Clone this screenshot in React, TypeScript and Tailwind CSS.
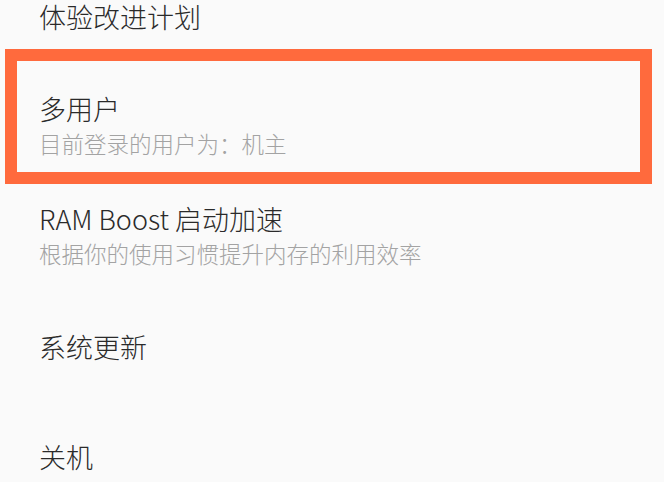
const items: { title: string; subtitle?: string }[] = [
  { title: '体验改进计划' },
  { title: '多用户', subtitle: '目前登录的用户为：机主' },
  { title: 'RAM Boost 启动加速', subtitle: '根据你的使用习惯提升内存的利用效率' },
  { title: '系统更新' },
  { title: '关机' },
];

export default function App() {
  return (
    <div
      className="relative w-[664px] h-[482px] overflow-hidden bg-[#fafafa]"
      style={{ fontFamily: '"Noto Sans CJK SC", "Noto Sans", sans-serif' }}
    >
      <div className="-mt-[39px] flex flex-col">
        {items.map((item) => (
          <div key={item.title} className="h-[110px] flex flex-col justify-center pl-[39px]">
            <div className="text-[27px] leading-[35px] font-light text-[#2a2a2a]">{item.title}</div>
            {item.subtitle && (
              <div className="text-[22.5px] leading-[35px] font-light text-[#a3a3a3]">{item.subtitle}</div>
            )}
          </div>
        ))}
      </div>

      {/* highlight annotation */}
      <div className="absolute left-[5px] top-[49px] w-[647px] h-[135px] border-[12px] border-[#ff6a3d]" />
    </div>
  );
}
